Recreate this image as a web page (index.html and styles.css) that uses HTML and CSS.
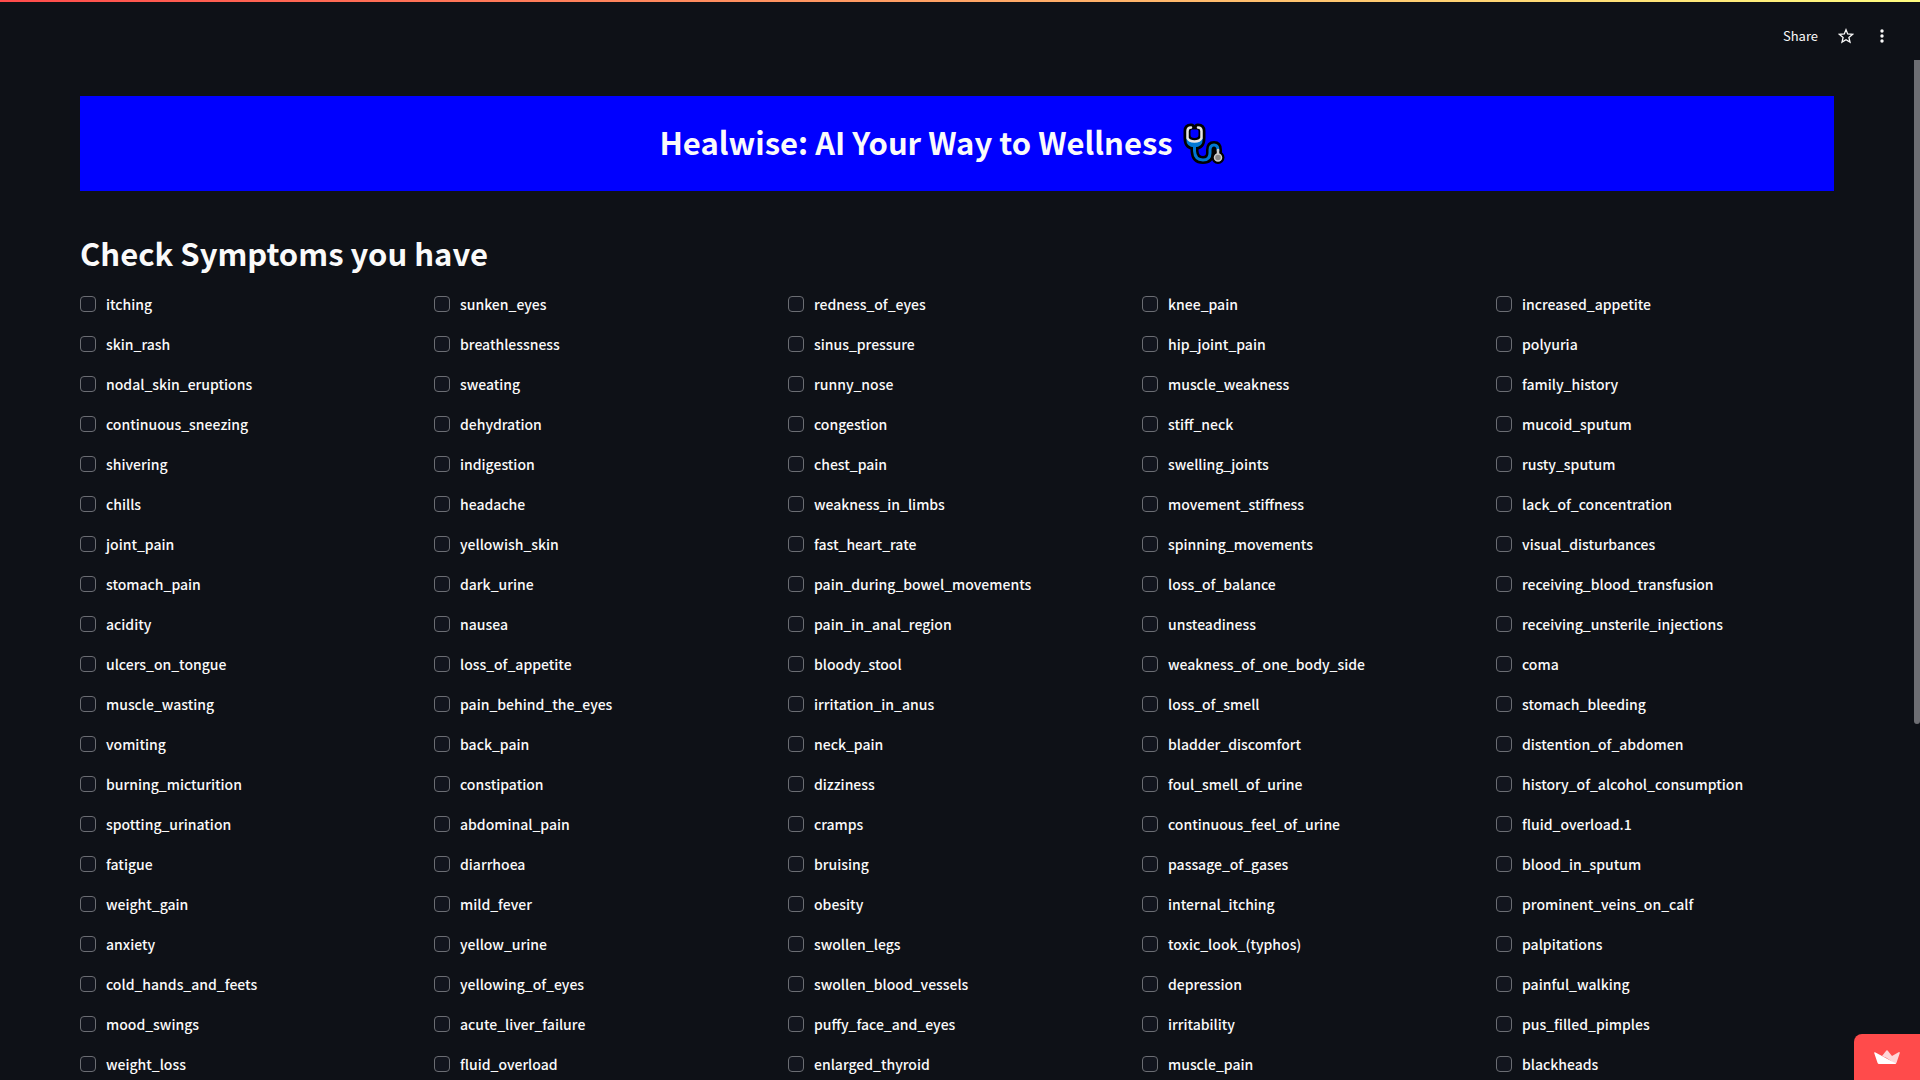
FILE: index.html
```html
<!DOCTYPE html>
<html lang="en">
<head>
<meta charset="utf-8">
<meta name="viewport" content="width=device-width, initial-scale=1">
<title>Healwise</title>
<link rel="stylesheet" href="styles.css">
</head>
<body>
<div class="decoration"></div>
<header class="toolbar">
  <button class="tool share" type="button">Share</button>
  <button class="tool" type="button" aria-label="Favorite">
    <svg width="16" height="16" viewBox="0 0 16 16" fill="none" stroke="currentColor" stroke-width="1.3" stroke-linejoin="miter"><path d="M8 1.800 9.700 6 14.500 6.400 10.900 9.500 12 14.100 8 11.700 4 14.100 5.100 9.500 1.500 6.400 6.300 6Z"/></svg>
  </button>
  <button class="tool" type="button" aria-label="Menu">
    <svg width="16" height="16" viewBox="0 0 16 16" fill="currentColor"><circle cx="8" cy="3" r="1.700"/><circle cx="8" cy="8" r="1.700"/><circle cx="8" cy="13" r="1.700"/></svg>
  </button>
</header>
<main class="content">
  <div class="banner">
    <h1 class="title">Healwise: AI Your Way to Wellness</h1>
    <svg class="stethoscope" width="42" height="42" viewBox="0 0 42 42" fill="none" stroke-linecap="round" stroke-linejoin="round">
      <g stroke="#000" stroke-width="8">
        <path d="M8 4.500Q4.500 4.500 4.500 8V15Q4.500 23 11.500 23Q18.500 23 18.500 15V8Q18.500 4.500 15 4.500"/>
        <path d="M11.500 23V28Q12 37 20 37Q27 37 27 30V27Q27 22 31 22Q35 22 35 27V33"/>
      </g>
      <circle cx="35" cy="34.500" r="6.500" fill="#000"/>
      <path d="M4.500 14Q4.500 22 11.500 22Q18.500 22 18.500 14Z" fill="#000"/>
      <path d="M4.500 16Q4.500 23 11.500 23Q18.500 23 18.500 16Q16 20 11.500 20Q7 20 4.500 16Z" fill="#0078d4" stroke="#0078d4" stroke-width="2.500"/>
      <path d="M11.500 23V28Q12 37 20 37Q27 37 27 30V27Q27 22 31 22Q35 22 35 27" stroke="#0078d4" stroke-width="3"/>
      <path d="M8 4.500Q4.500 4.500 4.500 8V15Q6 18.500 11.500 18.500Q17 18.500 18.500 15V8Q18.500 4.500 15 4.500" stroke="#e6e6e6" stroke-width="2.500"/>
      <path d="M7.500 8Q7.500 6.500 9 6.500H14Q15.500 6.500 15.500 8V12Q15.500 15 11.500 15Q7.500 15 7.500 12Z" fill="#00f"/>
      <path d="M35 27V32" stroke="#ccc" stroke-width="2.500"/>
      <circle cx="35" cy="34.500" r="3.500" fill="#888" stroke="#ccc" stroke-width="1.500"/>
    </svg>
  </div>
  <h1 class="title heading">Check Symptoms you have</h1>
  <div class="columns">
    <div class="column">
      <label class="check"><input type="checkbox">itching</label>
      <label class="check"><input type="checkbox">skin_rash</label>
      <label class="check"><input type="checkbox">nodal_skin_eruptions</label>
      <label class="check"><input type="checkbox">continuous_sneezing</label>
      <label class="check"><input type="checkbox">shivering</label>
      <label class="check"><input type="checkbox">chills</label>
      <label class="check"><input type="checkbox">joint_pain</label>
      <label class="check"><input type="checkbox">stomach_pain</label>
      <label class="check"><input type="checkbox">acidity</label>
      <label class="check"><input type="checkbox">ulcers_on_tongue</label>
      <label class="check"><input type="checkbox">muscle_wasting</label>
      <label class="check"><input type="checkbox">vomiting</label>
      <label class="check"><input type="checkbox">burning_micturition</label>
      <label class="check"><input type="checkbox">spotting_urination</label>
      <label class="check"><input type="checkbox">fatigue</label>
      <label class="check"><input type="checkbox">weight_gain</label>
      <label class="check"><input type="checkbox">anxiety</label>
      <label class="check"><input type="checkbox">cold_hands_and_feets</label>
      <label class="check"><input type="checkbox">mood_swings</label>
      <label class="check"><input type="checkbox">weight_loss</label>
    </div>
    <div class="column">
      <label class="check"><input type="checkbox">sunken_eyes</label>
      <label class="check"><input type="checkbox">breathlessness</label>
      <label class="check"><input type="checkbox">sweating</label>
      <label class="check"><input type="checkbox">dehydration</label>
      <label class="check"><input type="checkbox">indigestion</label>
      <label class="check"><input type="checkbox">headache</label>
      <label class="check"><input type="checkbox">yellowish_skin</label>
      <label class="check"><input type="checkbox">dark_urine</label>
      <label class="check"><input type="checkbox">nausea</label>
      <label class="check"><input type="checkbox">loss_of_appetite</label>
      <label class="check"><input type="checkbox">pain_behind_the_eyes</label>
      <label class="check"><input type="checkbox">back_pain</label>
      <label class="check"><input type="checkbox">constipation</label>
      <label class="check"><input type="checkbox">abdominal_pain</label>
      <label class="check"><input type="checkbox">diarrhoea</label>
      <label class="check"><input type="checkbox">mild_fever</label>
      <label class="check"><input type="checkbox">yellow_urine</label>
      <label class="check"><input type="checkbox">yellowing_of_eyes</label>
      <label class="check"><input type="checkbox">acute_liver_failure</label>
      <label class="check"><input type="checkbox">fluid_overload</label>
    </div>
    <div class="column">
      <label class="check"><input type="checkbox">redness_of_eyes</label>
      <label class="check"><input type="checkbox">sinus_pressure</label>
      <label class="check"><input type="checkbox">runny_nose</label>
      <label class="check"><input type="checkbox">congestion</label>
      <label class="check"><input type="checkbox">chest_pain</label>
      <label class="check"><input type="checkbox">weakness_in_limbs</label>
      <label class="check"><input type="checkbox">fast_heart_rate</label>
      <label class="check"><input type="checkbox">pain_during_bowel_movements</label>
      <label class="check"><input type="checkbox">pain_in_anal_region</label>
      <label class="check"><input type="checkbox">bloody_stool</label>
      <label class="check"><input type="checkbox">irritation_in_anus</label>
      <label class="check"><input type="checkbox">neck_pain</label>
      <label class="check"><input type="checkbox">dizziness</label>
      <label class="check"><input type="checkbox">cramps</label>
      <label class="check"><input type="checkbox">bruising</label>
      <label class="check"><input type="checkbox">obesity</label>
      <label class="check"><input type="checkbox">swollen_legs</label>
      <label class="check"><input type="checkbox">swollen_blood_vessels</label>
      <label class="check"><input type="checkbox">puffy_face_and_eyes</label>
      <label class="check"><input type="checkbox">enlarged_thyroid</label>
    </div>
    <div class="column">
      <label class="check"><input type="checkbox">knee_pain</label>
      <label class="check"><input type="checkbox">hip_joint_pain</label>
      <label class="check"><input type="checkbox">muscle_weakness</label>
      <label class="check"><input type="checkbox">stiff_neck</label>
      <label class="check"><input type="checkbox">swelling_joints</label>
      <label class="check"><input type="checkbox">movement_stiffness</label>
      <label class="check"><input type="checkbox">spinning_movements</label>
      <label class="check"><input type="checkbox">loss_of_balance</label>
      <label class="check"><input type="checkbox">unsteadiness</label>
      <label class="check"><input type="checkbox">weakness_of_one_body_side</label>
      <label class="check"><input type="checkbox">loss_of_smell</label>
      <label class="check"><input type="checkbox">bladder_discomfort</label>
      <label class="check"><input type="checkbox">foul_smell_of_urine</label>
      <label class="check"><input type="checkbox">continuous_feel_of_urine</label>
      <label class="check"><input type="checkbox">passage_of_gases</label>
      <label class="check"><input type="checkbox">internal_itching</label>
      <label class="check"><input type="checkbox">toxic_look_(typhos)</label>
      <label class="check"><input type="checkbox">depression</label>
      <label class="check"><input type="checkbox">irritability</label>
      <label class="check"><input type="checkbox">muscle_pain</label>
    </div>
    <div class="column">
      <label class="check"><input type="checkbox">increased_appetite</label>
      <label class="check"><input type="checkbox">polyuria</label>
      <label class="check"><input type="checkbox">family_history</label>
      <label class="check"><input type="checkbox">mucoid_sputum</label>
      <label class="check"><input type="checkbox">rusty_sputum</label>
      <label class="check"><input type="checkbox">lack_of_concentration</label>
      <label class="check"><input type="checkbox">visual_disturbances</label>
      <label class="check"><input type="checkbox">receiving_blood_transfusion</label>
      <label class="check"><input type="checkbox">receiving_unsterile_injections</label>
      <label class="check"><input type="checkbox">coma</label>
      <label class="check"><input type="checkbox">stomach_bleeding</label>
      <label class="check"><input type="checkbox">distention_of_abdomen</label>
      <label class="check"><input type="checkbox">history_of_alcohol_consumption</label>
      <label class="check"><input type="checkbox">fluid_overload.1</label>
      <label class="check"><input type="checkbox">blood_in_sputum</label>
      <label class="check"><input type="checkbox">prominent_veins_on_calf</label>
      <label class="check"><input type="checkbox">palpitations</label>
      <label class="check"><input type="checkbox">painful_walking</label>
      <label class="check"><input type="checkbox">pus_filled_pimples</label>
      <label class="check"><input type="checkbox">blackheads</label>
    </div>
  </div>
</main>
<div class="scroll-thumb"></div>
<a class="badge" href="#" aria-label="Streamlit">
  <svg width="26" height="14" viewBox="0 0 26 14"><path d="M8 6 12.400.4Q13 0 13.600.4L18 6 20 11Z" fill="#ffd5d8"/><path d="M25 2Q26 2 25.800 3L22.500 12.800Q22 14 21 14L13 8 18 6Z" fill="#ffd5d8"/><path d="M8 6 22 13.500 21 14H5Q4 14 3.600 13L.2 3Q0 2 1 2.200Z" fill="#fff"/></svg>
</a>
</body>
</html>
```
FILE: styles.css
```css
* {
  box-sizing: border-box;
}

body {
  margin: 0;
  min-height: 100vh;
  background: #0e1117;
  color: #fafafa;
  font-family: "Noto Sans CJK JP", "Noto Sans", sans-serif;
  font-size: 14px;
  line-height: 24px;
}

.decoration {
  position: absolute;
  top: 0;
  left: 0;
  right: 0;
  height: 2px;
  background: linear-gradient(90deg, #ff4b4b, #fffd80);
}

.toolbar {
  display: flex;
  justify-content: flex-end;
  align-items: center;
  gap: 20px;
  height: 72px;
  padding-right: 30px;
}

.tool {
  display: flex;
  padding: 0;
  border: 0;
  background: none;
  color: inherit;
  font: inherit;
  cursor: pointer;
}

.share {
  font-size: 13px;
}

.content {
  padding: 24px 86px 0 80px;
}

.banner {
  display: flex;
  justify-content: center;
  align-items: center;
  gap: 10px;
  height: 95px;
  padding-right: 30px;
  background: #00f;
}

.title {
  margin: 0;
  padding-bottom: 3px;
  font-size: 31px;
  font-weight: 600;
  line-height: 44px;
}

.heading {
  padding: 40px 0 17px;
}

.columns {
  display: grid;
  grid-template-columns: repeat(5, minmax(0, 1fr));
  gap: 16px;
}

.column {
  display: flex;
  flex-direction: column;
  gap: 16px;
}

.check {
  display: flex;
  align-items: center;
  gap: 10px;
  font-weight: 500;
}

.check input {
  appearance: none;
  width: 16px;
  height: 16px;
  margin: 0;
  border: 1px solid #6b6d73;
  border-radius: 4px;
  background: #12151e;
}

.check input:checked {
  background: #ff4b4b;
}

.scroll-thumb {
  position: fixed;
  top: 60px;
  right: 0;
  width: 6px;
  height: 664px;
  border-radius: 0 0 3px 3px;
  background: #6d6e73;
}

.badge {
  position: fixed;
  right: 0;
  bottom: 0;
  display: flex;
  justify-content: center;
  align-items: center;
  width: 66px;
  height: 46px;
  border-radius: 8px 0 0 0;
  background: #ff4b4b;
}
```
